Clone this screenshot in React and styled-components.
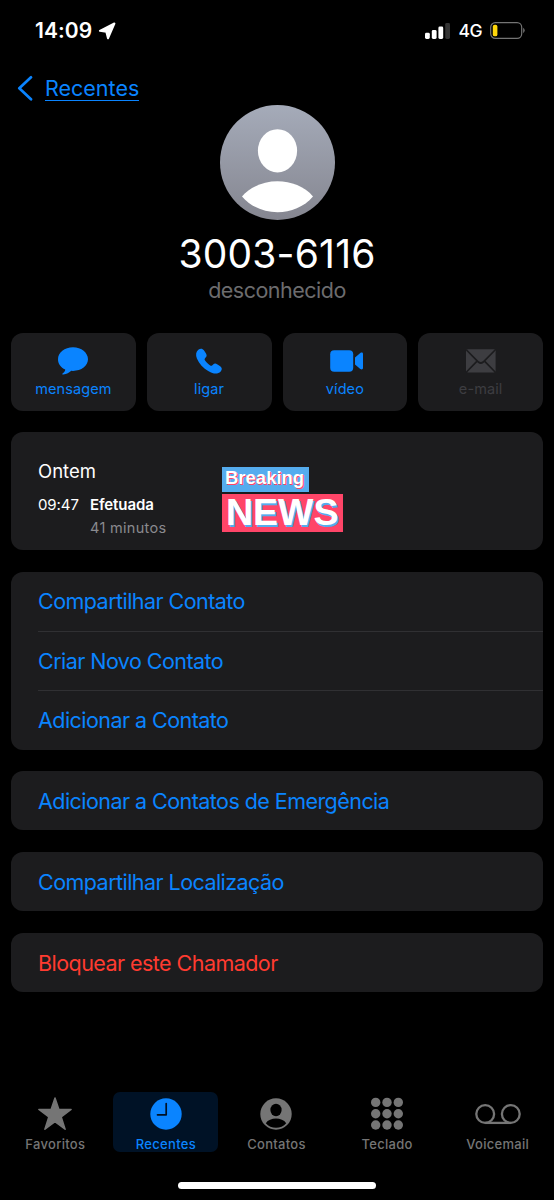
import React from "react";
import styled, { createGlobalStyle } from "styled-components";

const GlobalStyle = createGlobalStyle`
  * {
    box-sizing: border-box;
  }
  body {
    margin: 0;
    background: #000;
    font-family: Inter, "Liberation Sans", sans-serif;
  }
`;
const Screen = styled.div`
  width: 554px;
  height: 1200px;
  display: flex;
  flex-direction: column;
  background: #000;
  color: #fff;
  overflow: hidden;
`;
const StatusBar = styled.div`
  height: 62px;
  flex: none;
  display: flex;
  align-items: center;
  justify-content: space-between;
  padding: 0 28px 1px 35px;
`;
const StatusGroup = styled.div`
  display: flex;
  align-items: center;
`;
const Time = styled.span`
  font-size: 21px;
  font-weight: 600;
  letter-spacing: 0.1px;
  margin-right: 6px;
`;
const Network = styled.span`
  font-size: 17.5px;
  font-weight: 500;
  letter-spacing: -0.5px;
  margin: 0 8px 0 7px;
`;
const NavBar = styled.div`
  height: 43px;
  flex: none;
  padding: 10px 0 0 17px;
`;
const BackLink = styled.a`
  display: flex;
  align-items: center;
  height: 32px;
  gap: 12px;
  color: #0a84ff;
  font-size: 21.5px;
`;
const BackLabel = styled.span`
  height: 26px;
  line-height: 26px;
  border-bottom: 1.5px solid #0a84ff;
`;
const Header = styled.div`
  height: 227.5px;
  flex: none;
  display: flex;
  flex-direction: column;
  align-items: center;
`;
const Number = styled.div`
  margin-top: 12px;
  font-size: 39px;
  line-height: 44px;
  letter-spacing: 0.2px;
`;
const Unknown = styled.div`
  font-size: 21.5px;
  line-height: 28px;
  letter-spacing: -0.5px;
  color: #6c6c6e;
`;
const Actions = styled.div`
  display: grid;
  grid-template-columns: repeat(4, 1fr);
  gap: 11px;
  height: 78px;
  flex: none;
  margin: 0 11px;
`;
const Action = styled.div`
  display: flex;
  flex-direction: column;
  align-items: center;
  padding-top: 11.5px;
  border-radius: 12px;
  background: #1c1c1e;
  color: ${props => (props.$disabled ? "#3d3d41" : "#0a84ff")};
  font-size: 14.5px;
  line-height: 20px;
  letter-spacing: 0.1px;
  svg {
    display: block;
    margin-bottom: 1px;
  }
`;
const Card = styled.div`
  flex: none;
  margin: 21.6px 11px 0;
  border-radius: 12px;
  background: #1c1c1e;
  overflow: hidden;
`;
const CallLog = styled(Card)`
  position: relative;
  height: 118px;
  padding: 26px 27px 0;
`;
const Day = styled.div`
  font-size: 18.5px;
  line-height: 26px;
`;
const CallRow = styled.div`
  display: grid;
  grid-template-columns: 52px auto;
  margin-top: 9px;
  font-size: 15px;
  line-height: 23px;
  letter-spacing: -0.1px;
`;
const CallKind = styled.div`
  font-weight: 600;
`;
const Duration = styled.div`
  color: #8a8a8e;
  font-size: 14.5px;
  letter-spacing: 0.3px;
`;
const Sticker = styled.div`
  position: absolute;
  left: 211px;
  top: 35px;
  display: flex;
  flex-direction: column;
  align-items: flex-start;
  gap: 2px;
  font-family: "Liberation Sans", Arial, sans-serif;
  font-weight: 700;
`;
const StickerTop = styled.div`
  width: 87px;
  height: 25px;
  padding-left: 3px;
  background: #55acee;
  font-size: 18.5px;
  line-height: 22px;
  text-shadow: 1px 1px 0 #ff4568;
`;
const StickerBottom = styled.div`
  width: 121px;
  height: 38px;
  padding-left: 4px;
  background: #ff4568;
  font-size: 37.5px;
  line-height: 36px;
  text-shadow: 1.5px 1.5px 0 #55acee;
`;
const Row = styled.div`
  display: flex;
  align-items: center;
  height: 59.3px;
  margin-left: 27px;
  color: ${props => (props.$danger ? "#ff3b30" : "#0a84ff")};
  font-size: 21.5px;
  letter-spacing: -0.55px;
  & + & {
    border-top: 1px solid #303033;
  }
`;
const TabBar = styled.div`
  display: grid;
  grid-template-columns: repeat(5, 1fr);
  height: 60px;
  flex: none;
  margin: auto 1px 0 0;
`;
const Tab = styled.div`
  width: 105px;
  justify-self: center;
  display: flex;
  flex-direction: column;
  align-items: center;
  padding-top: 5px;
  border-radius: 7px;
  background: ${props => (props.$active ? "#001226" : "transparent")};
  color: ${props => (props.$active ? "#0a84ff" : "#757575")};
  font-size: 13px;
  font-weight: 500;
  line-height: 16px;
  letter-spacing: 0.3px;
  svg {
    display: block;
    margin-bottom: 5px;
  }
`;
const HomeIndicator = styled.div`
  width: 198px;
  height: 7px;
  flex: none;
  margin: 30px auto 11px;
  border-radius: 4px;
  background: #fff;
`;

const dots = [5.7, 17, 28.3];

function LocationIcon() {
  return (
    <svg width="18" height="18" viewBox="0 0 18 18" fill="#fff" stroke="#fff" strokeLinejoin="round">
      <path d="M1.900 8.800 16.400 1.500 10 16.300 8.300 9.800Z" strokeWidth="2" />
    </svg>
  );
}

function SignalIcon() {
  return (
    <svg width="26" height="16" viewBox="0 0 26 16" fill="#fff">
      <rect x="0" y="9.8" width="4.8" height="6.2" rx="1.4" />
      <rect x="6.8" y="7" width="4.8" height="9" rx="1.4" />
      <rect x="13.4" y="3.6" width="4.8" height="12.4" rx="1.4" />
      <rect x="20.2" y="0" width="4.8" height="16" rx="1.4" fill="#343434" />
    </svg>
  );
}

function BatteryIcon() {
  return (
    <svg width="36" height="17" viewBox="0 0 36 17">
      <rect x=".7" y=".7" width="31" height="15.6" rx="4.6" fill="none" stroke="#747474" strokeWidth="1.2" />
      <rect x="2.8" y="2.7" width="4.6" height="11.6" rx="1.9" fill="#ffd60a" />
      <path d="M33.2 5.8q3 2.7 0 5.4Z" fill="#747474" />
    </svg>
  );
}

function BackIcon() {
  return (
    <svg width="16" height="26" viewBox="0 0 16 26" fill="none" stroke="#0a84ff" strokeWidth="2.7" strokeLinecap="round" strokeLinejoin="round">
      <path d="M14 2.300 2.300 13.300 14 24.300" />
    </svg>
  );
}

function Avatar() {
  return (
    <svg width="115" height="115" viewBox="0 0 115 115">
      <defs>
        <linearGradient id="avatar" x1="0" y1="0" x2="0" y2="1">
          <stop offset="0" stopColor="#a5abb9" />
          <stop offset="1" stopColor="#858690" />
        </linearGradient>
      </defs>
      <circle cx="57.5" cy="57.5" r="57.5" fill="url(#avatar)" />
      <ellipse cx="57.5" cy="45.8" rx="19.6" ry="21.6" fill="#fff" />
      <path d="M22 91.5C39 71.3 76 71.3 93 91.5 75 112.5 40 112.5 22 91.5Z" fill="#fff" />
    </svg>
  );
}

function MessageIcon() {
  return (
    <svg width="34" height="34" viewBox="0 0 34 34" fill="currentColor">
      <path d="M17 3.300C8.600 3.300 2 8.600 2 15.300c0 4.700 2.700 8.200 7.200 10.200.2 1.500-1 2.900-2.400 3.700-.9.700-.5 1.400.5 1.300 3.400-.3 5.900-1.900 8-3.700l1.700.1c8.400 0 15-5.100 15-11.600S25.400 3.300 17 3.300Z" />
    </svg>
  );
}

function PhoneIcon() {
  return (
    <svg width="34" height="34" viewBox="0 0 34 34" fill="currentColor">
      <path d="M6.300 5.800c1.900-1.700 4.300-1.500 5.600.5l2.100 3.100c1 1.600.8 2.900-.4 4.200l-.7.900c-.5.600-.5 1.100 0 1.700 1.500 2.200 3 3.700 5.300 5.200.7.500 1.300.5 1.900 0l.8-.7c1.300-1.300 2.700-1.500 4.200-.5l3.100 2.100c2 1.400 2.100 3.500.5 5.100-2.900 3-7.100 2.800-12.100-.2C11.200 24.100 7.100 19.700 4.900 14.500c-1.400-3.500-1-6.600 1.400-8.700Z" />
    </svg>
  );
}

function VideoIcon() {
  return (
    <svg width="38" height="34" viewBox="0 0 38 34" fill="currentColor">
      <rect x="4.200" y="6.200" width="23" height="21.500" rx="4" />
      <path d="m29 13.500 5.300-4.600c1.200-.8 2.700-.6 2.700.9v14.300c0 1.500-1.500 1.700-2.700.9L29 20.400Z" />
    </svg>
  );
}

function MailIcon() {
  return (
    <svg width="34" height="34" viewBox="0 0 34 34">
      <rect x="2" y="5.200" width="29.600" height="23.200" rx="2" fill="currentColor" />
      <path d="m2.500 6 11.900 12q2.400 2 4.800 0L31.100 6M2.500 28l10.800-11.200M31.100 28 20.300 16.800" fill="none" stroke="#1c1c1e" strokeWidth="1.700" />
    </svg>
  );
}

function StarIcon() {
  return (
    <svg width="36" height="34" viewBox="0 0 36 34" fill="currentColor" stroke="currentColor" strokeLinejoin="round" strokeWidth="1.500">
      <path d="m18 .9 3.800 11.400 12.300.2-9.900 7.400 3.900 12.300L18 24.700 7.900 32.200l3.900-12.300-9.900-7.400 12.300-.2Z" />
    </svg>
  );
}

function ClockIcon() {
  return (
    <svg width="34" height="34" viewBox="0 0 34 34">
      <circle cx="17" cy="17" r="15.700" fill="currentColor" />
      <path d="M17.200 6.500v11.300H8.500" fill="none" stroke="#001226" strokeWidth="1.700" strokeLinecap="round" strokeLinejoin="round" />
    </svg>
  );
}

function ContactIcon() {
  return (
    <svg width="34" height="34" viewBox="0 0 34 34">
      <circle cx="17" cy="17" r="15.700" fill="currentColor" />
      <ellipse cx="17" cy="13" rx="5.600" ry="6.200" fill="#000" />
      <path d="M6.800 26.200c4-6.200 16.400-6.200 20.400 0-5 6-15.400 6-20.400 0Z" fill="#000" />
    </svg>
  );
}

function KeypadIcon() {
  return (
    <svg width="34" height="34" viewBox="0 0 34 34" fill="currentColor">
      {dots.map(y => dots.map(x => <circle key={x + "-" + y} cx={x} cy={y - 0.3} r="4.700" />))}
    </svg>
  );
}

function VoicemailIcon() {
  return (
    <svg width="48" height="34" viewBox="0 0 48 34" fill="none" stroke="currentColor" strokeWidth="2.300">
      <circle cx="11.200" cy="17" r="8.900" />
      <circle cx="36.800" cy="17" r="8.900" />
      <path d="M11.200 25.900h25.600" />
    </svg>
  );
}

function App() {
  return (
    <>
      <GlobalStyle />
      <Screen>
        <StatusBar>
          <StatusGroup>
            <Time>14:09</Time>
            <LocationIcon />
          </StatusGroup>
          <StatusGroup>
            <SignalIcon />
            <Network>4G</Network>
            <BatteryIcon />
          </StatusGroup>
        </StatusBar>
        <NavBar>
          <BackLink>
            <BackIcon />
            <BackLabel>Recentes</BackLabel>
          </BackLink>
        </NavBar>
        <Header>
          <Avatar />
          <Number>3003-6116</Number>
          <Unknown>desconhecido</Unknown>
        </Header>
        <Actions>
          <Action><MessageIcon />mensagem</Action>
          <Action><PhoneIcon />ligar</Action>
          <Action><VideoIcon />vídeo</Action>
          <Action $disabled><MailIcon />e-mail</Action>
        </Actions>
        <CallLog>
          <Day>Ontem</Day>
          <CallRow>
            <div>09:47</div>
            <div>
              <CallKind>Efetuada</CallKind>
              <Duration>41 minutos</Duration>
            </div>
          </CallRow>
          <Sticker>
            <StickerTop>Breaking</StickerTop>
            <StickerBottom>NEWS</StickerBottom>
          </Sticker>
        </CallLog>
        <Card>
          <Row>Compartilhar Contato</Row>
          <Row>Criar Novo Contato</Row>
          <Row>Adicionar a Contato</Row>
        </Card>
        <Card>
          <Row>Adicionar a Contatos de Emergência</Row>
        </Card>
        <Card>
          <Row>Compartilhar Localização</Row>
        </Card>
        <Card>
          <Row $danger>Bloquear este Chamador</Row>
        </Card>
        <TabBar>
          <Tab><StarIcon />Favoritos</Tab>
          <Tab $active><ClockIcon />Recentes</Tab>
          <Tab><ContactIcon />Contatos</Tab>
          <Tab><KeypadIcon />Teclado</Tab>
          <Tab><VoicemailIcon />Voicemail</Tab>
        </TabBar>
        <HomeIndicator />
      </Screen>
    </>
  );
}

export default App;
